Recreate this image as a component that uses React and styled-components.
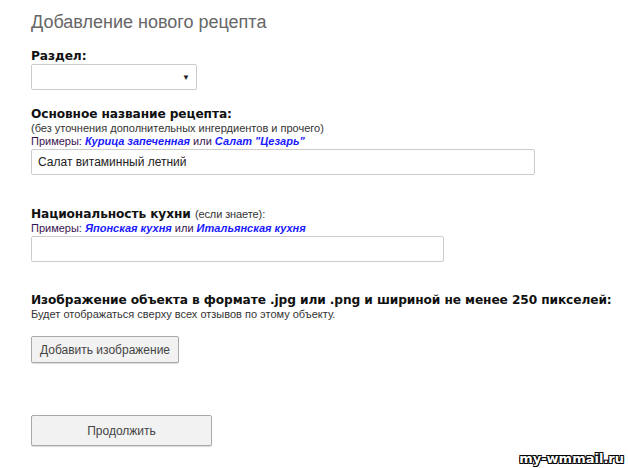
import styled, { createGlobalStyle } from 'styled-components';

const Global = createGlobalStyle`
  body { margin: 0; background: #fff; font-family: "Liberation Sans", Arial, sans-serif; }
`;

const Page = styled.div`
  position: relative;
  width: 628px;
  height: 468px;
  padding: 12px 0 0 31px;
  box-sizing: border-box;
  overflow: hidden;
`;

const Title = styled.h1`
  margin: 0 0 16px;
  font-size: 18px;
  font-weight: normal;
  color: #666;
`;

const Label = styled.div`
  font-family: "DejaVu Sans", Verdana, sans-serif;
  font-size: 12.2px;
  font-weight: bold;
  color: #111;
  line-height: 15px;
  white-space: nowrap;
  letter-spacing: -0.1px;
`;

const Aside = styled.span`
  font-family: "Liberation Sans", Arial, sans-serif;
  font-weight: normal;
  font-size: 11px;
  color: #333;
`;

const Note = styled.div`
  font-size: 11px;
  line-height: 13px;
  color: ${p => p.$purple ? '#3a1450' : '#333'};
`;

const Link = styled.a`
  color: #1a1aff;
  font-weight: bold;
  font-style: italic;
  text-decoration: none;
`;

const Select = styled.div`
  width: 166px;
  height: 26px;
  box-sizing: border-box;
  border: 1px solid #ccc;
  border-radius: 2px;
  display: flex;
  align-items: center;
  justify-content: flex-end;
  padding-right: 6px;
  font-size: 8px;
  color: #222;
  margin-bottom: 17px;
`;

const Input = styled.div`
  width: ${p => p.$w}px;
  height: 26px;
  box-sizing: border-box;
  border: 1px solid #ccc;
  border-radius: 2px;
  display: flex;
  align-items: center;
  padding-left: 6px;
  font-size: 12px;
  color: #222;
  margin-top: 1px;
  margin-bottom: ${p => p.$mb}px;
`;

const Button = styled.button`
  display: block;
  width: ${p => p.$w}px;
  height: ${p => p.$h}px;
  border: 1px solid #aaa;
  background: #f2f2f2;
  border-radius: 2px;
  font-family: "Liberation Sans", Arial, sans-serif;
  font-size: 12px;
  color: #444;
  padding: 0;
  margin-top: ${p => p.$mt}px;
  box-shadow: 0 1px 1px rgba(0,0,0,0.15);
`;

const Watermark = styled.div`
  position: absolute;
  right: 4px;
  bottom: 2px;
  font-family: "DejaVu Sans", sans-serif;
  font-weight: bold;
  font-size: 13px;
  color: #fff;
  text-shadow: -1px -1px 0 #000, 1px -1px 0 #000, -1px 1px 0 #000, 1px 1px 0 #000;
`;

export default function App() {
  return (
    <Page>
      <Global />
      <Title>Добавление нового рецепта</Title>
      <Label>Раздел:</Label>
      <Select>▼</Select>

      <Label>Основное название рецепта:</Label>
      <Note>(без уточнения дополнительных ингердиентов и прочего)</Note>
      <Note $purple>Примеры: <Link>Курица запеченная</Link> или <Link>Салат "Цезарь"</Link></Note>
      <Input $w={504} $mb={32}>Салат витаминный летний</Input>

      <Label>Национальность кухни <Aside>(если знаете):</Aside></Label>
      <Note $purple>Примеры: <Link>Японская кухня</Link> или <Link>Итальянская кухня</Link></Note>
      <Input $w={413} $mb={31}>{''}</Input>

      <Label>Изображение объекта в формате .jpg или .png и шириной не менее 250 пикселей:</Label>
      <Note>Будет отображаться сверху всех отзывов по этому объекту.</Note>
      <Button $w={148} $h={27} $mt={15}>Добавить изображение</Button>
      <Button $w={181} $h={31} $mt={52}>Продолжить</Button>
      <Watermark>my-wmmail.ru</Watermark>
    </Page>
  );
}
